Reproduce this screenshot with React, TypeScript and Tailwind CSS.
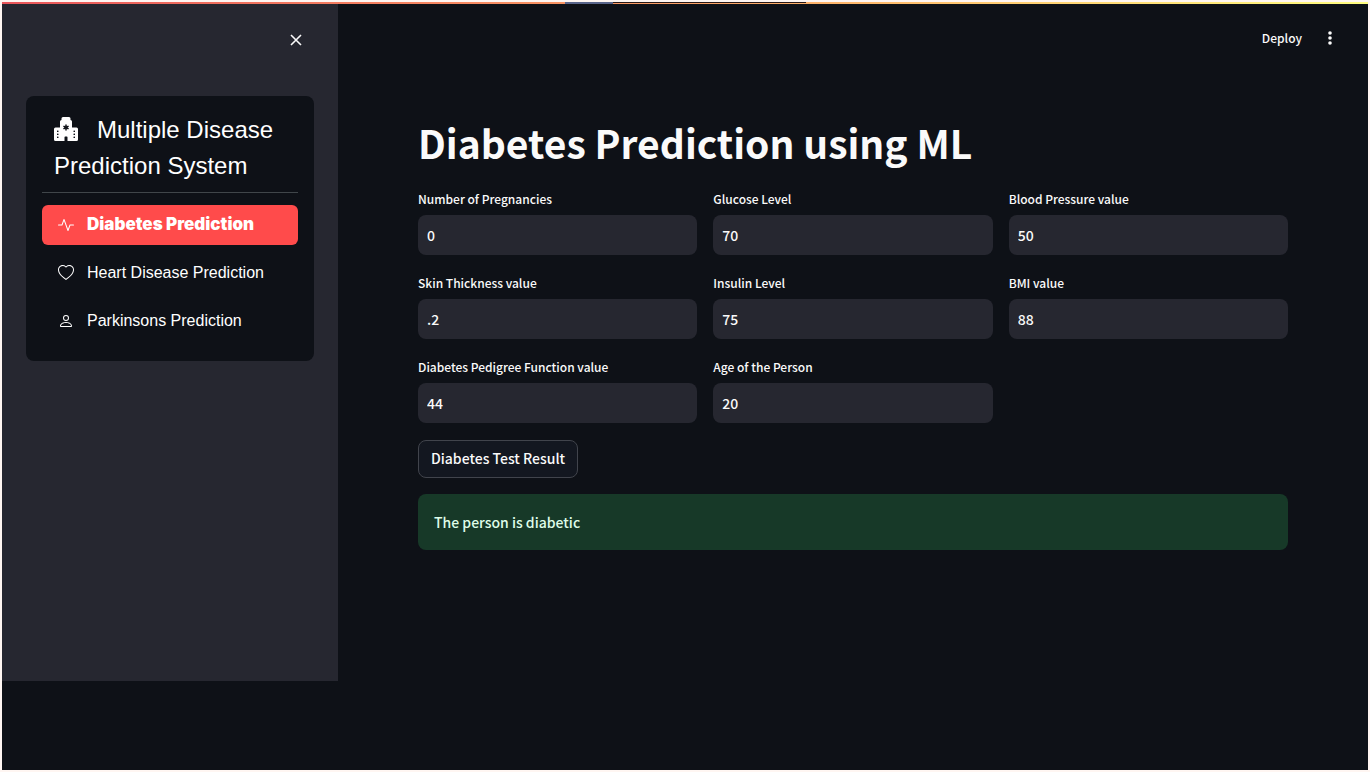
import { useState } from "react";
import type { ReactNode } from "react";
import { BsActivity, BsHeart, BsHospitalFill, BsPerson } from "react-icons/bs";

const fields: { id: string; label: string; value: string }[] = [
  { id: "pregnancies", label: "Number of Pregnancies", value: "0" },
  { id: "glucose", label: "Glucose Level", value: "70" },
  { id: "pressure", label: "Blood Pressure value", value: "50" },
  { id: "skin", label: "Skin Thickness value", value: ".2" },
  { id: "insulin", label: "Insulin Level", value: "75" },
  { id: "bmi", label: "BMI value", value: "88" },
  { id: "pedigree", label: "Diabetes Pedigree Function value", value: "44" },
  { id: "age", label: "Age of the Person", value: "20" },
];

function MenuLink({ icon, children, active = false }: { icon: ReactNode; children: ReactNode; active?: boolean }) {
  return (
    <a
      href="#"
      aria-current={active ? "page" : undefined}
      className={
        active
          ? "flex h-10 items-center gap-[13px] rounded-md bg-[#ff4b4b] px-4 font-['Inter',sans-serif] text-[17px] font-black text-white"
          : "flex h-10 items-center gap-[13px] rounded-md px-4 text-base text-white"
      }
    >
      <span className="flex w-4 shrink-0 justify-center">{icon}</span>
      <span className="whitespace-nowrap">{children}</span>
    </a>
  );
}

function Sidebar() {
  return (
    <aside className="mb-[89px] w-[336px] shrink-0 bg-[#262730] px-6">
      <div className="flex h-[92px] justify-end pt-6">
        <button type="button" aria-label="Close sidebar" className="mr-1.5 flex size-6 items-center justify-center text-[#fafafa]">
          <svg viewBox="0 0 12 12" className="size-3" fill="none" stroke="currentColor" strokeWidth="1.6" aria-hidden="true">
            <path d="M1 1l10 10M11 1L1 11" />
          </svg>
        </button>
      </div>
      <div className="rounded-lg bg-[#0e1117] px-4 pt-4 pb-5 font-['Liberation_Sans',Arial,sans-serif]">
        <h2 className="px-3 pb-2 text-2xl leading-9 text-white">
          <BsHospitalFill className="mr-[19px] inline-block size-6 align-[-3px]" aria-hidden="true" />
          Multiple Disease Prediction System
        </h2>
        <hr className="mb-3 border-[#40464a]" />
        <nav className="flex flex-col gap-2" aria-label="Prediction pages">
          <MenuLink active icon={<BsActivity className="size-4" />}>Diabetes Prediction</MenuLink>
          <MenuLink icon={<BsHeart className="size-4" />}>Heart Disease Prediction</MenuLink>
          <MenuLink icon={<BsPerson className="size-4" />}>Parkinsons Prediction</MenuLink>
        </nav>
      </div>
    </aside>
  );
}

export default function App() {
  const [values, setValues] = useState(() => fields.map((f) => f.value));

  return (
    <div className="flex min-h-screen flex-col bg-[#fff6f2] p-0.5 font-['Noto_Sans_CJK_SC','Noto_Sans',sans-serif] text-[#fafafa]">
      <div className="flex h-0.5 bg-linear-to-r from-[#e9555a] via-[#fba065] to-[#fffd80]">
        <div className="w-[563px]" />
        <div className="w-12 bg-[#59658a]" />
        <div className="h-px w-[193px] bg-[#2a1a17]" />
      </div>
      <div className="flex grow bg-[#0e1117]">
        <Sidebar />
        <div className="min-w-0 grow">
          <header className="flex h-[68px] items-center justify-end gap-4 pr-[26px]">
            <button type="button" className="text-xs leading-5 font-medium">Deploy</button>
            <button type="button" aria-label="Main menu" className="flex size-6 items-center justify-center">
              <svg viewBox="0 0 4 14" className="h-3.5 w-1" fill="currentColor" aria-hidden="true">
                <circle cx="2" cy="2" r="1.8" />
                <circle cx="2" cy="7" r="1.8" />
                <circle cx="2" cy="12" r="1.8" />
              </svg>
            </button>
          </header>
          <main className="px-20 pt-[42px]">
            <h1 className="pb-[19px] text-[39px] leading-[56px] font-bold">Diabetes Prediction using ML</h1>
            <form onSubmit={(e) => e.preventDefault()}>
              <div className="grid grid-cols-3 gap-x-4 gap-y-[18px]">
                {fields.map((f, i) => (
                  <div key={f.id}>
                    <label htmlFor={f.id} className="mb-1.5 block text-xs leading-5 font-medium">{f.label}</label>
                    <input
                      id={f.id}
                      type="text"
                      value={values[i]}
                      onChange={(e) => setValues(values.map((v, j) => (j === i ? e.target.value : v)))}
                      className="block h-10 w-full rounded-lg bg-[#262730] px-[9px] text-sm font-medium outline-none focus:ring-1 focus:ring-[#ff4b4b]"
                    />
                  </div>
                ))}
              </div>
              <button type="submit" className="mt-[17px] block h-[38px] rounded-lg border border-[#41444c] bg-[#131720] px-3 pb-0.5 text-sm font-medium">
                Diabetes Test Result
              </button>
            </form>
            <div role="status" className="mt-4 rounded-lg bg-[#173928] p-4 text-sm leading-6 font-medium text-[#dffde9]">
              The person is diabetic
            </div>
          </main>
        </div>
      </div>
    </div>
  );
}
